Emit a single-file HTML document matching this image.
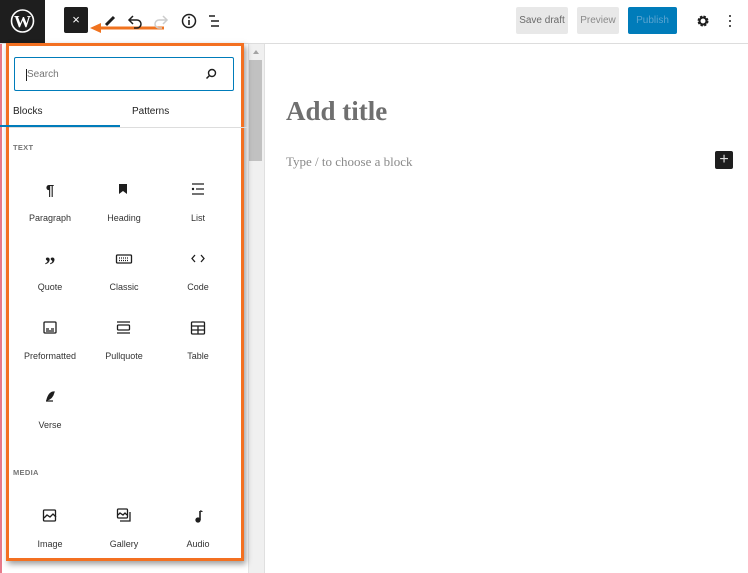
<!DOCTYPE html>
<html><head><meta charset="utf-8"><style>
*{box-sizing:border-box;margin:0;padding:0}
body{width:748px;height:573px;overflow:hidden;background:#fff;font-family:"Liberation Sans",sans-serif;position:relative;color:#1e1e1e}
.abs{position:absolute}
.top{left:0;top:0;width:748px;height:44px;border-bottom:1px solid #ddd;background:#fff}
.logo{left:0;top:0;width:45px;height:43px;background:#1e1e1e}
.btn{top:7px;height:27px;font-size:10px;line-height:28px;text-align:center;border-radius:2px}
.lbl{font-size:9px;color:#333;text-align:center;width:74px}
.cat{font-size:7.5px;color:#757575;font-weight:bold;letter-spacing:.3px}
svg{display:block}
</style></head><body>
<div class="abs top"></div>
<div class="abs logo"><svg width="45" height="43" viewBox="0 0 45 43"><circle cx="22.5" cy="21" r="11" fill="none" stroke="#fff" stroke-width="1.6"/><text x="22.5" y="27" text-anchor="middle" font-family="Liberation Serif" font-size="17" font-weight="bold" fill="#fff">W</text></svg></div>
<div class="abs" style="left:64px;top:7px;width:24px;height:26px;background:#1e1e1e;border-radius:2px;color:#fff;font-size:13px;text-align:center;line-height:26px">×</div>
<svg class="abs" style="left:88px;top:12px" width="80" height="22"><path d="M18 13 L26 5" stroke="#1e1e1e" stroke-width="3"/><path d="M6 16 L76 16" stroke="#f0731f" stroke-width="3"/><path d="M2 16 L13 11 L13 21Z" fill="#f0731f"/></svg>
<svg class="abs" style="left:126px;top:12px" width="100" height="20"><path d="M4 8 H11 a4 4 0 0 1 0 8 H8" fill="none" stroke="#1e1e1e" stroke-width="1.5"/><path d="M7 4 L3 8 L7 12" fill="none" stroke="#1e1e1e" stroke-width="1.5"/>
<path d="M40 8 H33 a4 4 0 0 0 0 8 H36" fill="none" stroke="#ccc" stroke-width="1.5"/><path d="M37 4 L41 8 L37 12" fill="none" stroke="#ccc" stroke-width="1.5"/>
<circle cx="63" cy="9" r="6.5" fill="none" stroke="#1e1e1e" stroke-width="1.5"/><path d="M63 8v5" stroke="#1e1e1e" stroke-width="1.6"/><circle cx="63" cy="5.5" r="1" fill="#1e1e1e"/>
<path d="M83 4h6M85 9h8M85 14h8" stroke="#1e1e1e" stroke-width="1.5"/></svg>
<div class="abs btn" style="left:516px;width:52px;background:#e8e8e8;color:#6a6a6a">Save draft</div>
<div class="abs btn" style="left:577px;width:42px;background:#e8e8e8;color:#8a8a8a">Preview</div>
<div class="abs btn" style="left:628px;width:49px;background:#007cba;color:#5aa4d0">Publish</div>
<svg class="abs" style="left:695px;top:14px" width="40" height="16"><circle cx="8" cy="7" r="4" fill="none" stroke="#1e1e1e" stroke-width="3" stroke-dasharray="2 1.2"/><circle cx="8" cy="7" r="3.5" fill="none" stroke="#1e1e1e" stroke-width="2"/><circle cx="35" cy="2" r="1" fill="#1e1e1e"/><circle cx="35" cy="7" r="1" fill="#1e1e1e"/><circle cx="35" cy="12" r="1" fill="#1e1e1e"/></svg>
<div class="abs" style="left:0;top:44px;width:2px;height:529px;background:#e87a8a"></div>
<div class="abs" style="left:248px;top:44px;width:16px;height:529px;background:#f0f0f0;border-left:1px solid #e4e4e4"></div>
<div class="abs" style="left:249px;top:60px;width:13px;height:101px;background:#c1c1c1"></div>
<div class="abs" style="left:253px;top:50px;width:0;height:0;border:3px solid transparent;border-bottom:4px solid #a3a3a3;border-top:0"></div>
<div class="abs" style="left:264px;top:44px;width:1px;height:529px;background:#e0e0e0"></div>
<div class="abs" style="left:6px;top:43px;width:238px;height:518px;border:3px solid #f37021;box-shadow:2px 3px 6px rgba(0,0,0,.4)"></div>
<div class="abs" style="left:14px;top:57px;width:220px;height:34px;border:1.5px solid #007cba;border-radius:2px"></div>
<div class="abs" style="left:26px;top:69px;font-size:10px;color:#757575;border-left:1px solid #1e1e1e;line-height:12px">Search</div>
<svg class="abs" style="left:205px;top:68px" width="12" height="12"><circle cx="7" cy="5" r="3.5" fill="none" stroke="#1e1e1e" stroke-width="1.4"/><path d="M4.5 7.5 L1.5 10.5" stroke="#1e1e1e" stroke-width="1.5"/></svg>
<div class="abs" style="left:13px;top:106px;font-size:10px">Blocks</div>
<div class="abs" style="left:132px;top:106px;font-size:10px">Patterns</div>
<div class="abs" style="left:9px;top:127px;width:238px;height:1px;background:#ddd"></div>
<div class="abs" style="left:0;top:125px;width:120px;height:2px;background:#007cba"></div>
<div class="abs cat" style="left:13px;top:143px">TEXT</div>
<div class="abs cat" style="left:13px;top:468px">MEDIA</div>
<svg class="abs" style="left:0;top:175px" width="240" height="360" fill="none" stroke="#1e1e1e" stroke-width="1.3">
<text x="50" y="20" text-anchor="middle" font-size="15" font-weight="bold" fill="#1e1e1e" stroke="none">¶</text>
<path d="M119 9h8v10l-4-3-4 3z" fill="#1e1e1e" stroke="none"/>
<circle cx="193" cy="14" r="1.2" fill="#1e1e1e" stroke="none"/><path d="M192 9h12M196 14h8M192 19h12"/>
<text x="50" y="97" text-anchor="middle" font-size="22" font-weight="bold" font-family="Liberation Serif" fill="#1e1e1e" stroke="none">”</text>
<rect x="116.5" y="80" width="15" height="8" rx="1"/><path d="M119 83h10M119 85.5h10" stroke-dasharray="1 1"/>
<path d="M195 80l-3 3.5 3 3.5M201 80l3 3.5-3 3.5"/>
<rect x="44" y="147" width="12" height="11" rx="1"/><path d="M46 154h3M51 154h3M46 156h8"/>
<path d="M117 147h13M117 158h13"/><rect x="117.5" y="150" width="12" height="5" rx="1"/>
<rect x="191.5" y="147" width="13" height="12" rx="1"/><path d="M191 151h14M198 151v8M191 155h14"/>
<path d="M46 226h7M47 225c1-4 3-8 7-8-1 4-3 7-7 8z" fill="#1e1e1e"/>
<rect x="43.5" y="335" width="12" height="11" rx="1"/><path d="M44 343l3-3 3 2 3-3 3 3"/>
<rect x="117.5" y="334" width="10" height="9" rx="1"/><path d="M118 340l2-2 3 2 2-2 2 2M130 337v9h-10"/>
<path d="M200 336v9" stroke-width="1.6"/><circle cx="198" cy="345" r="2" fill="#1e1e1e"/><path d="M200 336c1 0 2 0 2 1"/>
</svg>
<div class="abs lbl" style="left:13px;top:213px">Paragraph</div>
<div class="abs lbl" style="left:87px;top:213px">Heading</div>
<div class="abs lbl" style="left:161px;top:213px">List</div>
<div class="abs lbl" style="left:13px;top:282px">Quote</div>
<div class="abs lbl" style="left:87px;top:282px">Classic</div>
<div class="abs lbl" style="left:161px;top:282px">Code</div>
<div class="abs lbl" style="left:13px;top:351px">Preformatted</div>
<div class="abs lbl" style="left:87px;top:351px">Pullquote</div>
<div class="abs lbl" style="left:161px;top:351px">Table</div>
<div class="abs lbl" style="left:13px;top:420px">Verse</div>
<div class="abs lbl" style="left:13px;top:539px">Image</div>
<div class="abs lbl" style="left:87px;top:539px">Gallery</div>
<div class="abs lbl" style="left:161px;top:539px">Audio</div>
<div class="abs" style="left:286px;top:96px;font-family:'Liberation Serif',serif;font-weight:bold;font-size:27px;color:#6f6f6f">Add title</div>
<div class="abs" style="left:286px;top:154px;font-family:'Liberation Serif',serif;font-size:13px;color:#8a8a8a">Type / to choose a block</div>
<div class="abs" style="left:715px;top:151px;width:18px;height:18px;background:#1e1e1e;border-radius:2px;color:#ddd;font-size:16px;line-height:17px;text-align:center">+</div>
</body></html>
